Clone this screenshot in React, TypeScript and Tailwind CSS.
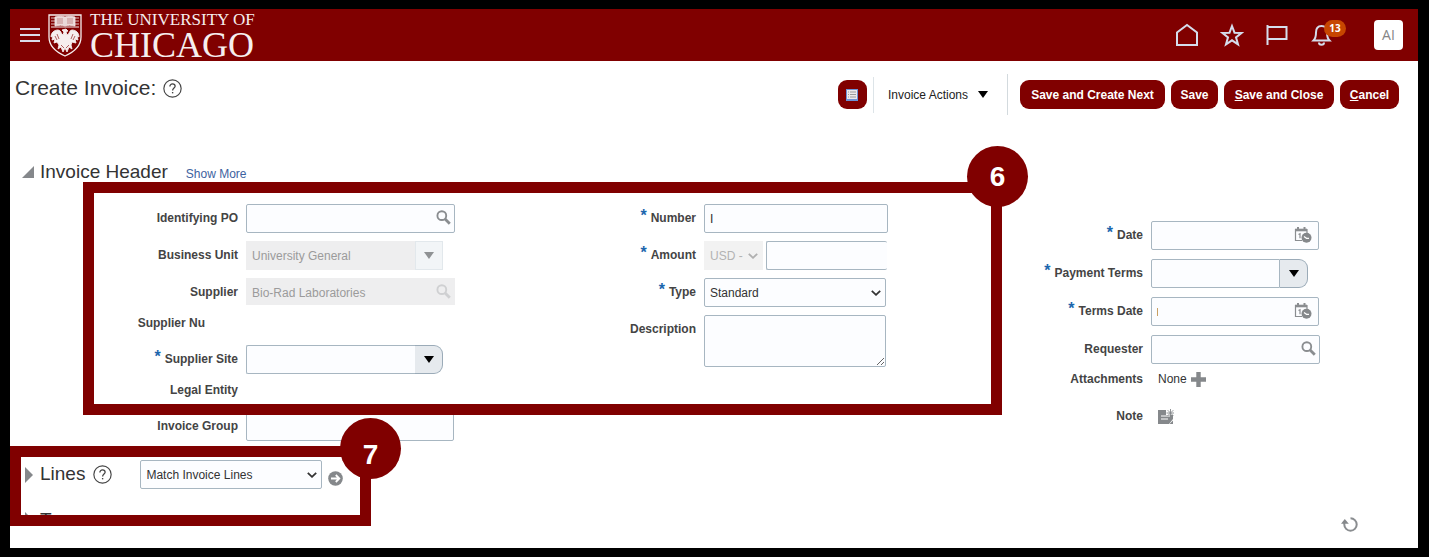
import React, {ReactNode} from 'react';

const inputClass = "block h-full min-w-0 rounded-[2px] border border-[#a7b6c1] bg-[#fcfdff] px-[5px] text-xs text-[#333] outline-none";
const actionClass = "h-[29px] rounded-[9px] bg-[#800000] text-xs font-bold text-white";

const HelpIcon = () => (
    <svg viewBox="0 0 18 18" className="h-[19px] w-[19px] shrink-0" fill="none" stroke="#444" strokeWidth="1.1">
        <circle cx="9" cy="9" r="8.200" />
        <path d="M6.500 7.200c0-1.700 1.100-2.500 2.500-2.500s2.500.9 2.500 2.200c0 1.600-2.400 1.900-2.400 4" strokeWidth="1.200" />
        <path d="M9.100 12.300v1.300" strokeWidth="1.300" />
    </svg>
);

const SearchIcon = ({className = ""}: { className?: string }) => (
    <svg viewBox="0 0 16 16" className={`pointer-events-none absolute top-[6px] right-[4px] h-[15px] w-[15px] ${className}`} fill="none" stroke="#8a8d90">
        <circle cx="6.200" cy="6" r="4.700" strokeWidth="2" />
        <path d="M9.700 9.600l5 5" strokeWidth="3" />
    </svg>
);

const CalendarIcon = () => (
    <svg viewBox="0 0 18 18" className="absolute top-[5px] right-[7px] h-[18px] w-[18px]" fill="none" stroke="#8a8d90">
        <path d="M8 14.500H1.500V3.500h11.500v4" strokeWidth="1.200" />
        <path d="M1 4h12" strokeWidth="2.600" />
        <path d="M4 1v4M10.500 1v4" strokeWidth="2" />
        <path d="M4.500 8.500l1.500-.8v4.500" strokeWidth="1.200" />
        <circle cx="12.500" cy="11.800" r="5" fill="#85888b" stroke="none" />
        <path d="M10 10.500l2.500 1.800h2.500" stroke="#fff" strokeWidth="1.200" />
    </svg>
);

const Chevron = ({color}: { color: string }) => (
    <svg viewBox="0 0 10 6" className="pointer-events-none absolute top-[12px] right-[5px] h-[6px] w-[10px]" fill="none" stroke={color} strokeWidth="1.800">
        <path d="M.8.8L5 4.800 9.200.8" />
    </svg>
);

const Down = ({color}: { color: string }) => (
    <svg viewBox="0 0 10 7" className="h-[7px] w-[10px]" fill={color}><path d="M0 0h10L5 7z" /></svg>
);

const Shield = () => (
    <svg viewBox="0 0 34 43" className="h-[43px] w-[34px] shrink-0" fill="none" stroke="#f6eeee">
        <path d="M1 1h32v22c0 9-7 15-16 19C8 38 1 32 1 23z" strokeWidth="1.300" />
        <path d="M3 13h28" strokeWidth="1" />
        {/* open book */}
        <path d="M7 3c4-1 7-1 10 0 3-1 6-1 10 0v9c-4-1-7-1-10 0-3-1-6-1-10 0z" fill="#eadada" strokeWidth=".8" />
        <path d="M3 4h4M3 7h4M3 10h4M27 4h4M27 7h4M27 10h4" strokeWidth=".8" />
        <path d="M9 5h6M9 7h6M9 9h6M19 5h6M19 7h6M19 9h6" stroke="#a04040" strokeWidth=".5" />
        {/* phoenix */}
        <path d="M14 16l4-1 2 2-2 1 1 3c3-1 2-5 5-5 4 0 7 3 7 7l-2-1 1 4-3-1 1 4-4-1-1 3 1 4-3-2-2 5-2-4-2 4-2-5-3 2 1-4-2-3-3 1 1-4-3 1 1-4-2 1c0-4 3-7 7-7 3 0 3 4 5 5l1-3z" fill="#f6eeee" strokeWidth=".9" />
        <path d="M9 20l2 5M7 22l2 4M25 20l-2 5M27 22l-2 4M13 31l3 3M21 31l-3 3" stroke="#800000" strokeWidth=".6" />
    </svg>
);

type RowProps = {
    label: string;
    id?: string;
    required?: boolean;
    size?: string;
    labelPad?: string;
    children?: ReactNode;
};

const Row = ({label, id, required, size = "h-[29px] leading-[29px]", labelPad = "", children}: RowProps) => (
    <div className={`flex gap-2 ${size}`}>
        <label htmlFor={id} className={`w-57 shrink-0 text-right text-xs leading-[inherit] font-bold whitespace-nowrap text-[#444] ${labelPad}`}>
            {required && <span className="mr-1 inline-block h-4 align-top text-base leading-[24px] text-[#1c66ad]">*</span>}
            {label}
        </label>
        {children}
    </div>
);

const Badge = ({children, className}: { children: ReactNode, className: string }) => (
    <div className={`absolute flex h-[61px] w-[61px] items-center justify-center rounded-full bg-[#800000] text-[28px] font-bold text-white ${className}`}>
        {children}
    </div>
);

const Header = () => (
    <header className="flex h-[52px] items-center justify-between bg-[#800000] pr-[15px] pl-[10px]">
        <div className="flex items-center">
            <button aria-label="Navigator" className="mr-2 flex w-5 flex-col gap-1">
                <span className="h-[2px] w-full bg-[#d9dcea]" />
                <span className="h-[2px] w-full bg-[#d9dcea]" />
                <span className="h-[2px] w-full bg-[#d9dcea]" />
            </button>
            <Shield />
            <div className="ml-2 pt-[2px] font-['Liberation_Serif',serif] text-[#f6eeee]">
                <div className="text-[17px] leading-[18px]">THE UNIVERSITY OF</div>
                <div className="text-[36px] leading-[32px]">CHICAGO</div>
            </div>
        </div>
        <div className="flex items-center">
            <button aria-label="Home" className="mr-[21px]">
                <svg viewBox="0 0 24 24" className="h-6 w-6" fill="none" stroke="#d5ddec" strokeWidth="2">
                    <path d="M2 22V9.500L12 2l10 7.500V22z" />
                </svg>
            </button>
            <button aria-label="Favorites" className="mr-[21px]">
                <svg viewBox="0 0 24 24" className="h-6 w-6" fill="none" stroke="#d5ddec" strokeWidth="2">
                    <path d="M12 3l2.500 6.700 7.200.2-5.700 4.500 2 6.900-6-4-6 4 2-6.900-5.700-4.500 7.200-.2z" />
                </svg>
            </button>
            <button aria-label="Watchlist" className="mr-[21px]">
                <svg viewBox="0 0 24 24" className="h-6 w-6" fill="none" stroke="#d5ddec" strokeWidth="2">
                    <path d="M2.500 2v20M2.500 4h19v12h-19" />
                </svg>
            </button>
            <button aria-label="Notifications" className="relative mr-[40px]">
                <svg viewBox="0 0 24 24" className="h-6 w-6" fill="none" stroke="#d5ddec" strokeWidth="2">
                    <path d="M3.500 17.500c2-2 2.500-4 2.500-8C6 5 8 3 11.500 3S17 5 17 9.500c0 4 .5 6 2.500 8z" />
                    <path d="M9 19.500c0 3 5 3 5 0" />
                </svg>
                <span className="absolute -top-[3px] left-[14px] h-[17px] w-[22px] rounded-full bg-[#c74600] text-center font-['Open_Sans',sans-serif] text-[10px] leading-[17px] font-bold text-white">13</span>
            </button>
            <button className="h-[30px] w-[29px] rounded-[4px] bg-white font-['Open_Sans',sans-serif] text-sm text-[#858585]">AI</button>
        </div>
    </header>
);

const Toolbar = () => (
    <div className="flex h-[98px] items-start justify-between pt-[13px] pr-[19px] pl-[5px]">
        <div className="flex items-center gap-[7px]">
            <h1 className="text-[21px] leading-[28px] text-[#333]">Create Invoice:</h1>
            <HelpIcon />
        </div>
        <div className="flex h-[41px] items-center">
            <button aria-label="Show list" className={`flex w-[29px] items-center justify-center ${actionClass}`}>
                <svg viewBox="0 0 12 12" className="h-3 w-3">
                    <path d="M0 0h12v12H0z" fill="#6d92d6" />
                    <path d="M1 1h10v9H1z" fill="#ece9ea" />
                    <path d="M2 3h1M4 3h6M2 5.500h1M4 5.500h6M2 8h1M4 8h6" stroke="#9a9a9a" />
                </svg>
            </button>
            <div className="ml-[6px] h-[36px] w-px bg-[#dde4e8]" />
            <button className="ml-[14px] flex items-center gap-[10px] text-xs text-[#222]">
                Invoice Actions <Down color="#000" />
            </button>
            <div className="mr-3 ml-[19px] h-full w-px bg-[#d3dade]" />
            <div className="flex gap-[6px]">
                <button className={`w-[145px] ${actionClass}`}>Save and Create Next</button>
                <button className={`w-[47px] ${actionClass}`}>Save</button>
                <button className={`w-[110px] ${actionClass}`}><u>S</u>ave and Close</button>
                <button className={`w-[59px] ${actionClass}`}><u>C</u>ancel</button>
            </div>
        </div>
    </div>
);

const App = () => {
    return (
        <div className="min-h-screen bg-black pt-[9px] pr-[11px] pb-[9px] pl-[10px] font-['Liberation_Sans',Arial,sans-serif]">
            <main className="min-h-[539px] bg-white">
                <Header />
                <Toolbar />

                {/* Invoice header */}
                <section className="relative">
                    <div className="flex h-[26px] items-center pl-3">
                        <svg viewBox="0 0 12 12" className="h-3 w-3" fill="#85888b"><path d="M12 0v12H0z" /></svg>
                        <h2 className="ml-[6px] text-[19px] text-[#333]">Invoice Header</h2>
                        <a href="#" className="mt-1 ml-[18px] text-xs text-[#3d62a0]">Show More</a>
                    </div>

                    <div className="grid grid-cols-[458fr_447fr_503fr] pt-[18px]">
                        <div className="flex flex-col gap-2 pt-px">
                            <Row label="Identifying PO" id="po">
                                <div className="relative w-[209px]">
                                    <input id="po" className={`w-full ${inputClass}`} />
                                    <SearchIcon />
                                </div>
                            </Row>
                            <Row label="Business Unit" id="unit">
                                <div className="flex w-[197px]">
                                    <input id="unit" disabled defaultValue="University General" className="min-w-0 flex-1 bg-[#eeeeef] px-[6px] text-xs text-[#9b9b9b]" />
                                    <button aria-label="Open business unit" disabled className="flex w-[28px] items-center justify-center border border-[#e2e8ec] bg-[#f2f5f7]">
                                        <Down color="#8f9294" />
                                    </button>
                                </div>
                            </Row>
                            <Row label="Supplier" id="supplier">
                                <div className="relative h-[27px] w-[209px]">
                                    <input id="supplier" disabled defaultValue="Bio-Rad Laboratories" className="block h-full w-full bg-[#eeeeef] px-[6px] pt-[2px] text-xs text-[#9b9b9b]" />
                                    <SearchIcon className="opacity-30" />
                                </div>
                            </Row>
                            <Row label="Supplier Nu" size="h-[22px] leading-4" labelPad="pr-[33px]" />
                            <Row label="Supplier Site" id="site" required>
                                <div className="flex w-[197px]">
                                    <input id="site" className={`flex-1 rounded-r-none border-r-0 ${inputClass}`} />
                                    <button aria-label="Open supplier site" className="flex w-[28px] items-center justify-center rounded-r-[9px] border border-l-0 border-[#9babb8] bg-[#e6eaee]">
                                        <Down color="#000" />
                                    </button>
                                </div>
                            </Row>
                            <Row label="Legal Entity" size="h-[22px] leading-4" />
                            <Row label="Invoice Group" id="group">
                                <input id="group" className={`w-[208px] ${inputClass}`} />
                            </Row>
                        </div>

                        <div className="flex flex-col gap-2 pt-px">
                            <Row label="Number" id="number" required>
                                <input id="number" defaultValue="I" className={`w-[184px] ${inputClass}`} />
                            </Row>
                            <Row label="Amount" id="amount" required>
                                <div className="flex gap-[3px]">
                                    <div className="relative w-[59px]">
                                        <select aria-label="Currency" disabled className="block h-full w-full appearance-none bg-[#f2f2f2] pl-[6px] text-xs text-[#b3b3b3] opacity-100">
                                            <option>USD -</option>
                                        </select>
                                        <Chevron color="#b0b0b0" />
                                    </div>
                                    <input id="amount" className={`w-[121px] border-r-0 ${inputClass}`} />
                                </div>
                            </Row>
                            <Row label="Type" id="type" required>
                                <div className="relative w-[182px]">
                                    <select id="type" className={`w-full appearance-none ${inputClass}`}>
                                        <option>Standard</option>
                                    </select>
                                    <Chevron color="#333" />
                                </div>
                            </Row>
                            <Row label="Description" id="description" size="h-[52px] leading-[29px]">
                                <textarea id="description" className={`w-[182px] ${inputClass}`} />
                            </Row>
                        </div>

                        <div className="flex flex-col gap-[9px] pt-[18px]">
                            <Row label="Date" id="date" required>
                                <div className="relative w-[168px]">
                                    <input id="date" className={`w-full ${inputClass}`} />
                                    <CalendarIcon />
                                </div>
                            </Row>
                            <Row label="Payment Terms" id="terms" required>
                                <div className="flex w-[157px]">
                                    <input id="terms" className={`flex-1 rounded-r-none ${inputClass}`} />
                                    <button aria-label="Open payment terms" className="flex w-[28px] items-center justify-center rounded-r-[9px] border border-l-0 border-[#9babb8] bg-[#e6eaee]">
                                        <Down color="#000" />
                                    </button>
                                </div>
                            </Row>
                            <Row label="Terms Date" id="termsDate" required>
                                <div className="relative w-[168px]">
                                    <input id="termsDate" className={`w-full ${inputClass}`} />
                                    <span className="absolute top-[11px] left-[6px] h-2 w-px bg-[#c9a063]" />
                                    <CalendarIcon />
                                </div>
                            </Row>
                            <Row label="Requester" id="requester">
                                <div className="relative w-[169px]">
                                    <input id="requester" className={`w-full ${inputClass}`} />
                                    <SearchIcon />
                                </div>
                            </Row>
                            <Row label="Attachments" size="h-5 leading-3">
                                <div className="flex h-3 items-center gap-1 pl-[7px] text-xs text-[#333]">
                                    None
                                    <button aria-label="Add attachment">
                                        <svg viewBox="0 0 15 15" className="h-[15px] w-[15px]" fill="#85888b"><path d="M5.300 0h4.400v5.300H15v4.400H9.700V15H5.300V9.700H0V5.300h5.300z" /></svg>
                                    </button>
                                </div>
                            </Row>
                            <Row label="Note">
                                <button aria-label="Add note" className="ml-[7px]">
                                    <svg viewBox="0 0 16 16" className="h-4 w-4">
                                        <path d="M0 1h8v5h7v4l-4 5H0z" fill="#85888b" />
                                        <path d="M3 7h9M3 10h7" stroke="#fff" />
                                        <path d="M12.500 0v8M8.500 4h8M9.700 1.200l5.600 5.600M15.300 1.200L9.700 6.800" stroke="#85888b" strokeWidth=".9" />
                                        <path d="M15 11.500V15h-3.500z" fill="#85888b" />
                                    </svg>
                                </button>
                            </Row>
                        </div>
                    </div>

                    {/* Step 6 */}
                    <div className="pointer-events-none absolute top-[23px] right-[416px] left-[73px] h-[233px] border-[11px] border-[#800000]">
                        <Badge className="-top-[47px] -right-[37px]">6</Badge>
                    </div>
                </section>

                {/* Lines, step 7 */}
                <section className="mt-[5px] flex items-end justify-between pr-[60px]">
                    <div className="relative h-20 w-[361px] border-[11px] border-[#800000]">
                        <div className="h-full overflow-hidden pt-[3px] pl-1">
                            <div className="flex h-[29px] items-center">
                                <svg viewBox="0 0 8 16" className="h-4 w-2" fill="#85888b"><path d="M0 0l8 8-8 8z" /></svg>
                                <h2 className="ml-[7px] text-[19px] text-[#333]">Lines</h2>
                                <span className="ml-2"><HelpIcon /></span>
                                <div className="relative ml-7 h-full w-[182px]">
                                    <select aria-label="Lines action" className={`w-full appearance-none ${inputClass}`}>
                                        <option>Match Invoice Lines</option>
                                    </select>
                                    <Chevron color="#333" />
                                </div>
                                <button aria-label="Go" className="mt-2 ml-[6px]">
                                    <svg viewBox="0 0 15 15" className="h-[15px] w-[15px]">
                                        <circle cx="7.500" cy="7.500" r="7.300" fill="#85888b" />
                                        <path d="M3 7.500h8M7.800 4l3.500 3.500L7.800 11" fill="none" stroke="#fff" strokeWidth="1.800" />
                                    </svg>
                                </button>
                            </div>
                            <div className="mt-[19px] flex h-6 items-center">
                                <svg viewBox="0 0 8 16" className="h-4 w-2" fill="#85888b"><path d="M0 0l8 8-8 8z" /></svg>
                                <h2 className="ml-[7px] text-[19px] leading-6 text-[#333]">T</h2>
                            </div>
                        </div>
                        <Badge className="-top-[39px] -right-[41px] pt-3">7</Badge>
                    </div>
                    <button aria-label="Refresh" className="-mb-[6px]">
                        <svg viewBox="0 0 17 15" className="h-[15px] w-[17px]" fill="none" stroke="#8a8d90" strokeWidth="2">
                            <path d="M9.500 1.300a6.200 6.200 0 1 1-6.200 6.200V5" />
                            <path d="M0 6.800L3.800 2l4 4.800z" fill="#85888b" stroke="none" />
                        </svg>
                    </button>
                </section>
            </main>
        </div>
    );
};

export default App;
